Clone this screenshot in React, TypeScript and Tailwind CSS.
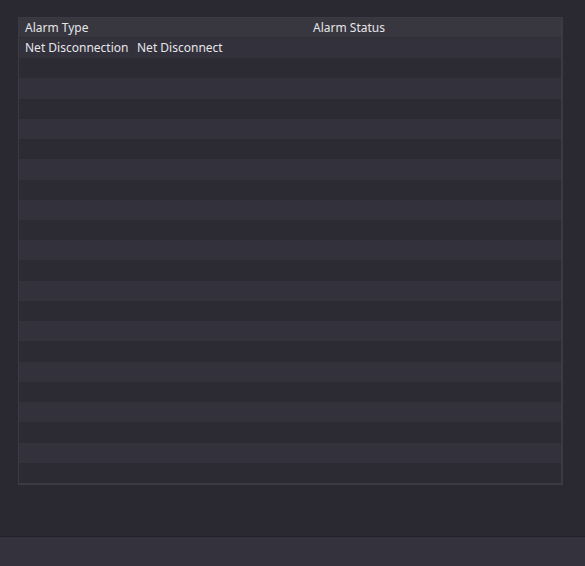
import React from "react";

export default function App() {
  const rows = Array.from({ length: 22 }, (_, i) => i);
  return (
    <div
      className="w-[585px] h-[566px] bg-[#2a2831] flex flex-col text-[12px] text-[#e6e6ea]"
      style={{ fontFamily: '"Noto Sans", "Open Sans", sans-serif' }}
    >
      <div className="flex-1 pt-[17px] pl-[18px] pr-[22px]">
        <div className="w-[545px] h-[468px] border border-[#3b3944] border-r-[2px] border-b-[2px] flex flex-col">
          <div className="h-[20px] bg-[#38363f] border-b border-[#2f2d36] flex items-center relative shrink-0">
            <span className="absolute left-[6px] top-[1px] leading-[18px]">Alarm Type</span>
            <span className="absolute left-[294px] top-[1px] leading-[18px]">Alarm Status</span>
          </div>
          <div className="flex-1 grid grid-rows-[repeat(22,1fr)]">
            {rows.map((i) => (
              <div
                key={i}
                className={`flex items-center ${i % 2 === 0 ? "bg-[#33313b]" : "bg-[#2c2a33]"}`}
              >
                {i === 0 && (
                  <>
                    <span className="w-[118px] shrink-0 pl-[6px] leading-[18px] whitespace-nowrap">Net Disconnection</span>
                    <span className="leading-[18px] whitespace-nowrap">Net Disconnect</span>
                  </>
                )}
              </div>
            ))}
          </div>
        </div>
      </div>
      <div className="h-[30px] bg-[#34323c] border-t border-[#222028] shrink-0" />
    </div>
  );
}
